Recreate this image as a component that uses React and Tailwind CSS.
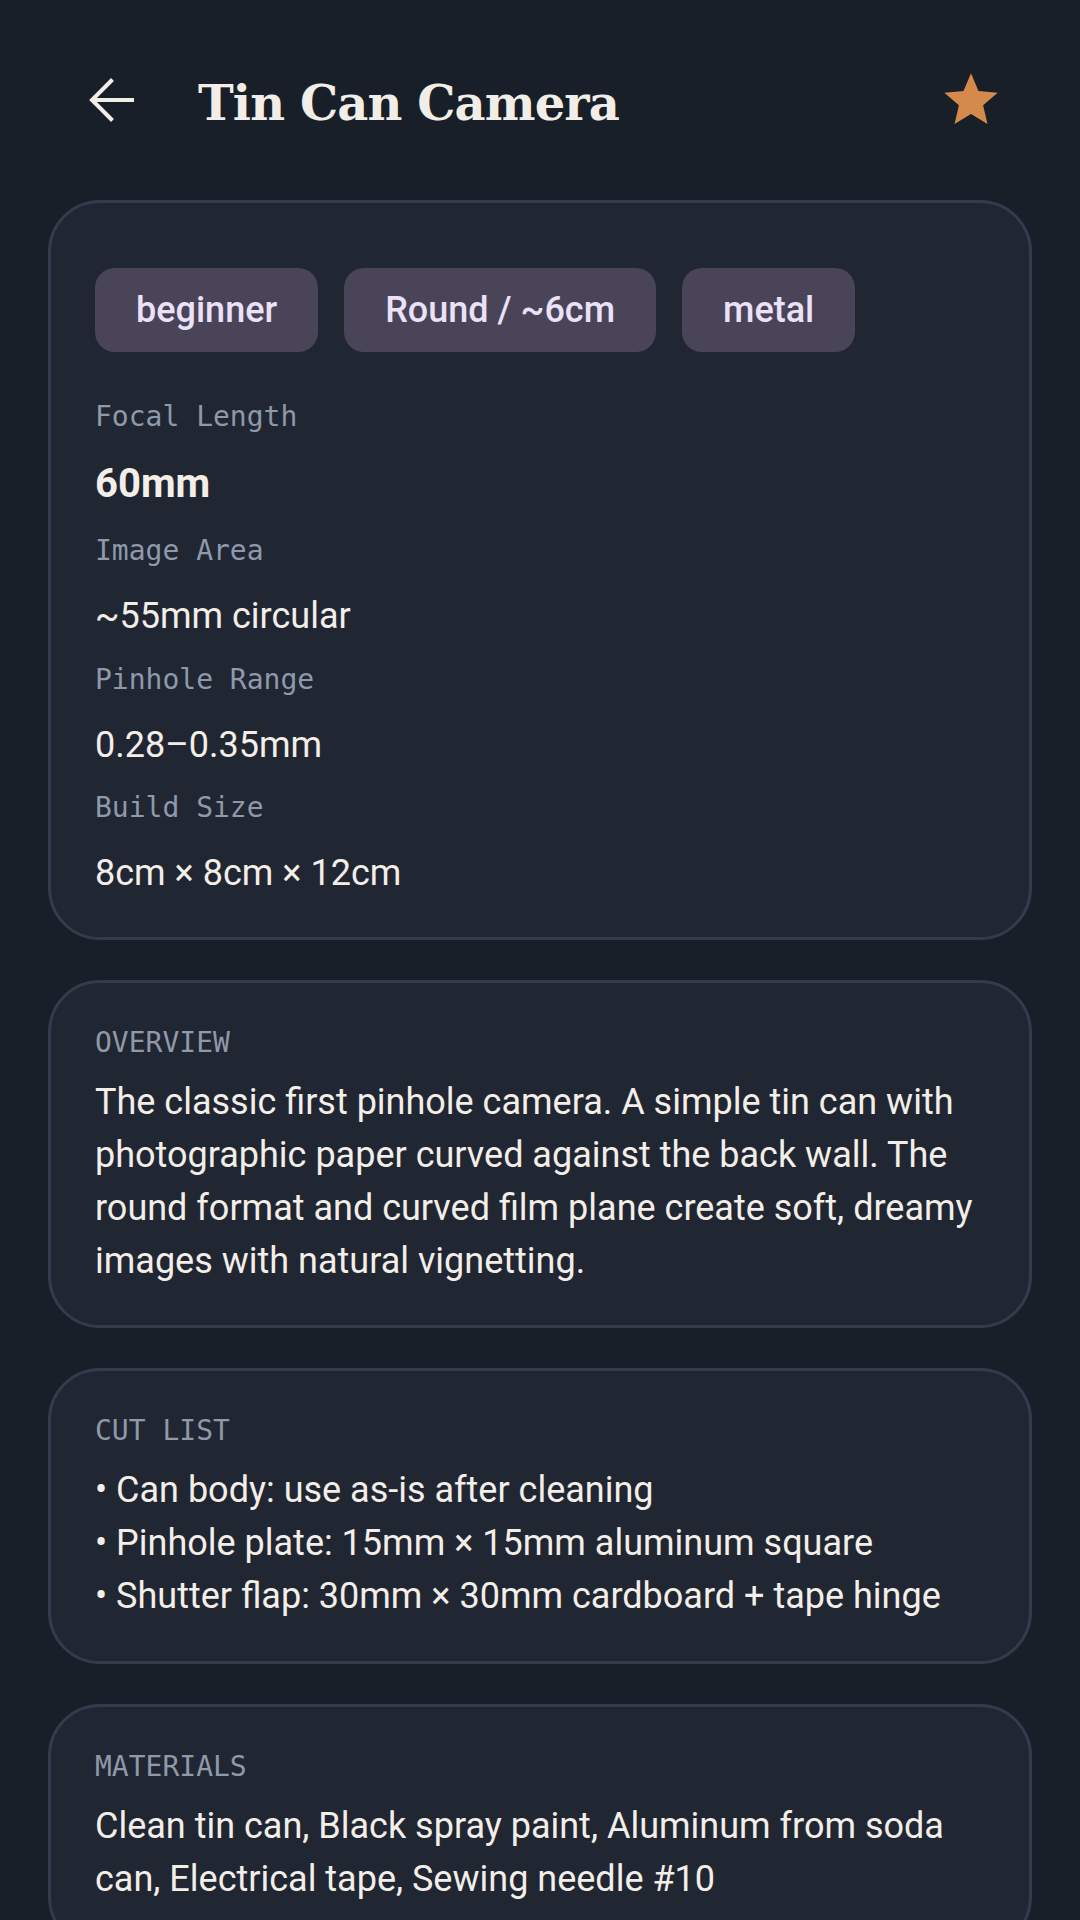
import React from 'react';

const specs = [
  { label: 'Focal Length', value: '60mm', strong: true, inner: 'gap-[23px]', top: '' },
  { label: 'Image Area', value: '~55mm circular', inner: 'gap-[21px]', top: 'mt-[23px]' },
  { label: 'Pinhole Range', value: '0.28–0.35mm', inner: 'gap-[21px]', top: 'mt-[20px]' },
  { label: 'Build Size', value: '8cm × 8cm × 12cm', inner: 'gap-[21px]', top: 'mt-[19px]' },
];

const tags = ['beginner', 'Round / ~6cm', 'metal'];

const cutList = [
  'Can body: use as-is after cleaning',
  'Pinhole plate: 15mm × 15mm aluminum square',
  'Shutter flap: 30mm × 30mm cardboard + tape hinge',
];

const mono = "font-['DejaVu_Sans_Mono',monospace]";

const Card = ({ className = '', children }) => (
  <section
    className={`bg-[#212633] border-[3px] border-[#333b4d] rounded-[52px] px-[44px] ${className}`}
  >
    {children}
  </section>
);

const SectionLabel = ({ children }) => (
  <h2 className={`${mono} text-[28px] leading-[40px] text-[#8e99aa] uppercase`}>{children}</h2>
);

const App = () => {
  return (
    <div className="min-h-screen bg-[#191f29] font-['Roboto',sans-serif] text-[#f3eee8]">
      {/* Top bar */}
      <header className="h-[200px] flex items-center pl-[88px] pr-[77px]">
        <button className="w-[46px] h-[46px] flex items-center justify-center">
          <svg width="46" height="46" viewBox="0 0 46 46" fill="none" stroke="#f2ede6" strokeWidth="4">
            <path d="M4 23H46" />
            <path d="M24.5 2.5L4 23L24.5 43.5" strokeLinejoin="miter" />
          </svg>
        </button>
        <h1 className="ml-[64px] mt-[5px] font-['DejaVu_Serif',serif] font-bold text-[48px] leading-[60px] text-[#f2ede6] tracking-[-0.9px]">
          Tin Can Camera
        </h1>
        <button className="ml-auto w-[64px] h-[64px]">
          <svg width="64" height="64" viewBox="0 0 24 24" fill="#d38a4b">
            <path d="M12 17.27L18.18 21l-1.64-7.03L22 9.24l-7.19-.61L12 2 9.19 8.63 2 9.24l5.46 4.73L5.82 21z" />
          </svg>
        </button>
      </header>

      <main className="px-[48px] flex flex-col gap-[40px]">
        {/* Specs */}
        <Card className="pt-[65px] pb-[40px]">
          <div className="flex gap-[26px] mb-[45px]">
            {tags.map((t) => (
              <span
                key={t}
                className="h-[84px] px-[41px] flex items-center rounded-[20px] bg-[#4a4459] text-[#ebe1f8] text-[36px] font-medium"
              >
                {t}
              </span>
            ))}
          </div>
          <div className="flex flex-col">
            {specs.map((s) => (
              <div key={s.label} className={`flex flex-col ${s.inner} ${s.top}`}>
                <span className={`${mono} text-[28px] leading-[40px] text-[#8e99aa]`}>{s.label}</span>
                <span
                  className={
                    s.strong
                      ? 'text-[40px] leading-[48px] font-bold'
                      : 'text-[36px] leading-[48px]'
                  }
                >
                  {s.value}
                </span>
              </div>
            ))}
          </div>
        </Card>

        {/* Overview */}
        <Card className="pt-[40px] pb-[37px]">
          <SectionLabel>Overview</SectionLabel>
          <p className="mt-[13px] text-[36px] leading-[53px]">
            The classic first pinhole camera. A simple tin can with photographic paper curved
            against the back wall. The round format and curved film plane create soft, dreamy
            images with natural vignetting.
          </p>
        </Card>

        {/* Cut list */}
        <Card className="pt-[40px] pb-[38px]">
          <SectionLabel>Cut List</SectionLabel>
          <ul className="mt-[13px] text-[36px] leading-[53px]">
            {cutList.map((c) => (
              <li key={c}>• {c}</li>
            ))}
          </ul>
        </Card>

        {/* Materials */}
        <Card className="pt-[40px] pb-[40px]">
          <SectionLabel>Materials</SectionLabel>
          <p className="mt-[13px] text-[36px] leading-[53px]">
            Clean tin can, Black spray paint, Aluminum from soda can, Electrical tape, Sewing
            needle #10
          </p>
        </Card>
        <div className="h-[40px]" />
      </main>
    </div>
  );
};

export default App;
